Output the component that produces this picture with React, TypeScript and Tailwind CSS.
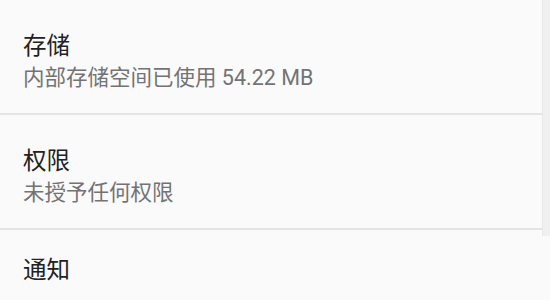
import React from 'react';

const font = { fontFamily: '"Roboto", "Noto Sans CJK SC", sans-serif' };

function Row({ title, summary, last }: { title: string; summary?: string; last?: boolean }) {
  return (
    <div className={`flex flex-col px-[23px] ${summary ? 'h-[115px] justify-center pt-[10px]' : 'pt-[25px]'} ${last ? '' : 'border-b-2 border-[#e4e4e4]'}`}>
      <div className="text-[23.5px] leading-[31px] text-[#222222]">{title}</div>
      {summary && <div className="text-[21.5px] leading-[31px] text-[#737373]">{summary}</div>}
    </div>
  );
}

export default function App() {
  return (
    <div className="w-[550px] h-[300px] overflow-hidden bg-[#fafafa] flex" style={font}>
      <div className="flex-1">
        <Row title="存储" summary="内部存储空间已使用 54.22 MB" />
        <Row title="权限" summary="未授予任何权限" />
        <Row title="通知" last />
      </div>
      <div className="w-[8px] h-[236px] bg-[#f0f0f0] border-l border-[#e8e8e8]" />
    </div>
  );
}
